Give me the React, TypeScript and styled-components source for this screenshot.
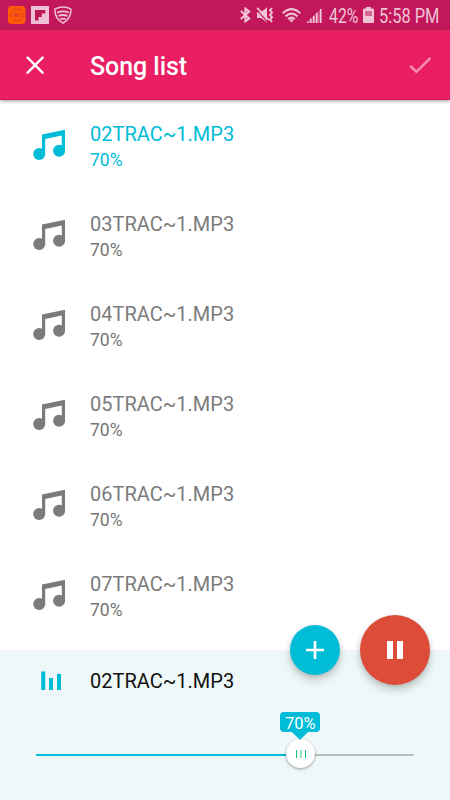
import React from "react";
import styled, { createGlobalStyle } from "styled-components";

const CYAN = "#00bcd7";
const GREY = "#7b7b7b";

const GlobalStyle = createGlobalStyle`
  * { box-sizing: border-box; }
  body { margin: 0; background: #fff; font-family: Roboto, sans-serif; }
`;

const Screen = styled.main`
  width: 450px;
  height: 800px;
  display: flex;
  flex-direction: column;
  overflow: hidden;
  background: #fff;
`;

const Icon = styled.svg`
  display: block;
  flex: none;
`;

const StatusBar = styled.div`
  flex: none;
  height: 30px;
  padding: 0 11px 0 8px;
  display: flex;
  align-items: center;
  justify-content: space-between;
  background: #c2185b;
  color: #f0c5d6;
`;

const Notifications = styled.div`
  display: flex;
  gap: 5px;
`;

const SystemIcons = styled.div`
  display: flex;
  align-items: center;
  height: 30px;
`;

const StatusText = styled.span<{ $width: number; $squeeze: number }>`
  display: block;
  width: ${(p) => p.$width}px;
  font-size: 20px;
  line-height: 30px;
  white-space: nowrap;
  transform: scaleX(${(p) => p.$squeeze});
  transform-origin: left center;
  padding-top: 1px;
`;

const Spacer = styled.i<{ $w: number }>`
  width: ${(p) => p.$w}px;
`;

const AppBar = styled.header`
  flex: none;
  height: 70px;
  padding: 0 18px 0 26px;
  display: flex;
  align-items: center;
  background: #e91e63;
  border-bottom: 1px solid #cf1552;
  box-shadow: 0 1px 4px rgba(0, 0, 0, 0.4);
  z-index: 1;
`;

const Title = styled.h1`
  flex: 1;
  margin: 4px 0 0 46px;
  font-size: 25px;
  font-weight: 500;
  line-height: 30px;
  letter-spacing: -0.05px;
  color: #fff;
`;

const IconButton = styled.button`
  display: block;
  padding: 0;
  border: 0;
  background: none;
  color: inherit;
`;

const SongList = styled.ul`
  flex: none;
  height: 550px;
  margin: 0;
  padding: 0;
  list-style: none;
  overflow: hidden;
`;

const SongRow = styled.li<{ $active: boolean }>`
  height: 90px;
  padding: 21px 0 0 32px;
  display: flex;
  align-items: flex-start;
  gap: 22px;
  color: ${(p) => (p.$active ? CYAN : GREY)};
`;

const NoteBox = styled.div`
  padding-top: 7px;
`;

const SongName = styled.div`
  font-size: 20px;
  line-height: 26px;
`;

const SongLevel = styled.div<{ $active: boolean }>`
  font-size: 17.5px;
  line-height: 26px;
  color: ${(p) => (p.$active ? CYAN : "#757575")};
`;

const Player = styled.footer`
  position: relative;
  flex: none;
  height: 150px;
  background: #eff8f8;
`;

const NowPlaying = styled.div`
  height: 60px;
  padding: 2px 0 0 41px;
  display: flex;
  align-items: center;
  gap: 28px;
  color: #111;
`;

const Fab = styled.button<{ $size: number; $right: number; $color: string }>`
  position: absolute;
  top: ${(p) => -p.$size / 2}px;
  right: ${(p) => p.$right}px;
  width: ${(p) => p.$size}px;
  height: ${(p) => p.$size}px;
  padding: 0;
  border: 0;
  border-radius: 50%;
  display: grid;
  place-items: center;
  background: ${(p) => p.$color};
  box-shadow: 0 5px 9px rgba(0, 0, 0, 0.2), 0 1px 4px rgba(0, 0, 0, 0.1);
`;

const Slider = styled.div`
  position: relative;
  height: 2px;
  margin: 44px 36px 0;
  border-radius: 1px;
  background: #b9bdbd;
`;

const Fill = styled.div`
  height: 2px;
  border-radius: 1px;
  background: ${CYAN};
`;

const Thumb = styled.div`
  position: absolute;
  top: -15px;
  width: 29px;
  height: 29px;
  margin-left: -14.6px;
  border-radius: 50%;
  display: grid;
  place-items: center;
  background: #fff;
  box-shadow: 0 1px 3px rgba(0, 0, 0, 0.4);
`;

const Bubble = styled.div`
  position: absolute;
  top: -42px;
  width: 40px;
  height: 20px;
  margin-left: -20.3px;
  border-radius: 4px;
  background: ${CYAN};
  color: #fff;
  font-size: 16.5px;
  line-height: 23px;
  text-align: center;

  &::after {
    content: "";
    position: absolute;
    left: 12px;
    top: 20px;
    border: 8px solid transparent;
    border-top-color: ${CYAN};
    border-bottom: 0;
  }
`;

const RecorderIcon = () => (
  <Icon width="18" height="18" viewBox="0 0 18 18">
    <rect width="17.4" height="18" rx="3.5" fill="#ff5b05" />
    <circle cx="8.8" cy="9" r="6" fill="none" stroke="#db3832" strokeWidth="1" strokeDasharray="14 2 5 1.5" />
    <path d="M6.5 11V7.2h1.3q1.3 0 1.3 1.1T7.8 9.4H6.8M8 9.6 9 11M11 7v4" fill="none" stroke="#d43b3b" strokeWidth="1.1" />
  </Icon>
);

const FlipIcon = () => (
  <Icon width="18" height="18" viewBox="0 0 18 18">
    <rect width="18" height="18" fill="#f0c0d4" />
    <path d="M4 4h10.3v3.5h-3.5V11H7.5v3.5H4z" fill="#bd1658" />
  </Icon>
);

const ShieldIcon = () => (
  <Icon width="18" height="18" viewBox="0 0 18 18" fill="none" stroke="#f0c0d4" strokeWidth="1.5">
    <path d="M.8 3.2Q9-1 17 3.2 17 12.7 9 17.2.8 12.7.8 3.2Z" />
    <path d="M3.2 6.6Q9 4.3 14.8 6.6M4.4 10Q9 8 13.6 10M6.2 13.2Q9 11.9 11.8 13.2" strokeWidth="1.8" />
  </Icon>
);

const BluetoothIcon = () => (
  <Icon width="11" height="16" viewBox="0 0 11 16" fill="none" stroke="currentColor" strokeWidth="2">
    <path d="M.8 4 9.2 11.4 5.4 14.4V1.6L9.2 4.6.8 12" />
  </Icon>
);

const MuteIcon = () => (
  <Icon width="18" height="16" viewBox="0 0 18 16">
    <path d="M1 5h4l6-4.5v15L5 11H1z" fill="currentColor" />
    <path d="M.2 2.6 11.6 14.8" stroke="#c2185b" strokeWidth="1.2" />
    <path d="M1.2.9 12.8 13" stroke="currentColor" strokeWidth="1.8" />
    <path d="m16 1-2 2.3 2 2.3-2 2.3 2 2.4-2 2.3 2 2.4" fill="none" stroke="currentColor" strokeWidth="1.9" />
  </Icon>
);

const WifiIcon = () => (
  <Icon width="19" height="15" viewBox="0 0 19 15" fill="none" stroke="currentColor" strokeWidth="2.2">
    <path d="M.8 5.2Q9.5-3 18.2 5.2M3.6 8.4Q9.5 3 15.4 8.4M6.2 11.2Q9.5 8.2 12.8 11.2" />
    <path d="M7.3 12.1Q9.5 10.5 11.7 12.1L9.5 14.6Z" fill="currentColor" stroke="none" />
  </Icon>
);

const SignalIcon = () => (
  <Icon width="16" height="15" viewBox="0 0 16 15" fill="currentColor">
    <path d="M0 15 15.5 0v15z" opacity=".35" />
    <path d="M1 15v-1.5h1.5V15zM4 15v-4.5h1.5V15zM7 15V8h1.5v7zM10 15V5h1.5v10zM14 15V1h1.5v14z" />
  </Icon>
);

const BatteryIcon = () => (
  <Icon width="11" height="16" viewBox="0 0 11 16">
    <path d="M3 0h5v1.6h1.8q1.2 0 1.2 1.2v12q0 1.2-1.2 1.2H1.2Q0 16 0 14.8V2.8Q0 1.6 1.2 1.6H3z" fill="currentColor" />
    <path d="M2 4h7v5H2z" fill="#d56b95" />
  </Icon>
);

const NoteIcon = () => (
  <Icon width="36" height="34" viewBox="0 0 36 34" fill="currentColor">
    <path d="M10 6.6 33 1.8V23h-3.2V7.5L13.2 11V26H10z" />
    <circle cx="7.2" cy="26" r="6" />
    <circle cx="27.1" cy="22.7" r="6" />
  </Icon>
);

const CloseIcon = () => (
  <Icon width="18" height="18" viewBox="0 0 18 18" stroke="#fff" strokeWidth="2.4" strokeLinecap="round">
    <path d="m1.6 1.6 15 15M16.6 1.6l-15 15" />
  </Icon>
);

const CheckIcon = () => (
  <Icon width="24" height="18" viewBox="0 0 24 18" fill="none" stroke="#f590b2" strokeWidth="2.4">
    <path d="m2.2 9.8 6.2 6.1L22.5 1.8" />
  </Icon>
);

const BarsIcon = () => (
  <Icon width="21" height="20" viewBox="0 0 21 20" fill={CYAN}>
    <path d="M.2.5h4v18.5h-4zM8 7h4v12H8zM16 3h4v16h-4z" />
  </Icon>
);

const songs = ["02", "03", "04", "05", "06", "07"].map((n) => ({
  name: `${n}TRAC~1.MP3`,
  level: 70,
}));

export default function App() {
  const current = songs[0];
  const position = { left: `${current.level}%` };

  return (
    <>
      <GlobalStyle />
      <Screen>
        <StatusBar>
          <Notifications>
            <RecorderIcon />
            <FlipIcon />
            <ShieldIcon />
          </Notifications>
          <SystemIcons>
            <BluetoothIcon />
            <Spacer $w={5} />
            <MuteIcon />
            <Spacer $w={8} />
            <WifiIcon />
            <Spacer $w={5} />
            <SignalIcon />
            <Spacer $w={7} />
            <StatusText $width={30} $squeeze={0.79}>42%</StatusText>
            <Spacer $w={4} />
            <BatteryIcon />
            <Spacer $w={5} />
            <StatusText $width={60} $squeeze={0.82}>5:58 PM</StatusText>
          </SystemIcons>
        </StatusBar>
        <AppBar>
          <IconButton aria-label="Close">
            <CloseIcon />
          </IconButton>
          <Title>Song list</Title>
          <IconButton aria-label="Done">
            <CheckIcon />
          </IconButton>
        </AppBar>
        <SongList>
          {songs.map((song, i) => (
            <SongRow key={song.name} $active={i === 0}>
              <NoteBox>
                <NoteIcon />
              </NoteBox>
              <div>
                <SongName>{song.name}</SongName>
                <SongLevel $active={i === 0}>{song.level}%</SongLevel>
              </div>
            </SongRow>
          ))}
        </SongList>
        <Player>
          <NowPlaying>
            <BarsIcon />
            <SongName>{current.name}</SongName>
          </NowPlaying>
          <Fab $size={50} $right={110} $color={CYAN} aria-label="Add song">
            <Icon width="18" height="18" viewBox="0 0 18 18" stroke="#fff" strokeWidth="2.6">
              <path d="M9 0v18M0 9h18" />
            </Icon>
          </Fab>
          <Fab $size={70} $right={20} $color="#dd4b39" aria-label="Pause">
            <Icon width="16" height="18" viewBox="0 0 16 18" fill="#fff">
              <path d="M0 0h6v18H0zM10 0h6v18h-6z" />
            </Icon>
          </Fab>
          <Slider>
            <Fill style={{ width: `${current.level}%` }} />
            <Thumb style={position}>
              <Icon width="10" height="8" viewBox="0 0 10 8">
                <path d="M0 0h1v8H0zM9 0h1v8H9z" fill="#0fc47a" />
                <path d="M4 0h2v8H4z" fill="#8ce0b8" />
              </Icon>
            </Thumb>
            <Bubble style={position}>{current.level}%</Bubble>
          </Slider>
        </Player>
      </Screen>
    </>
  );
}
